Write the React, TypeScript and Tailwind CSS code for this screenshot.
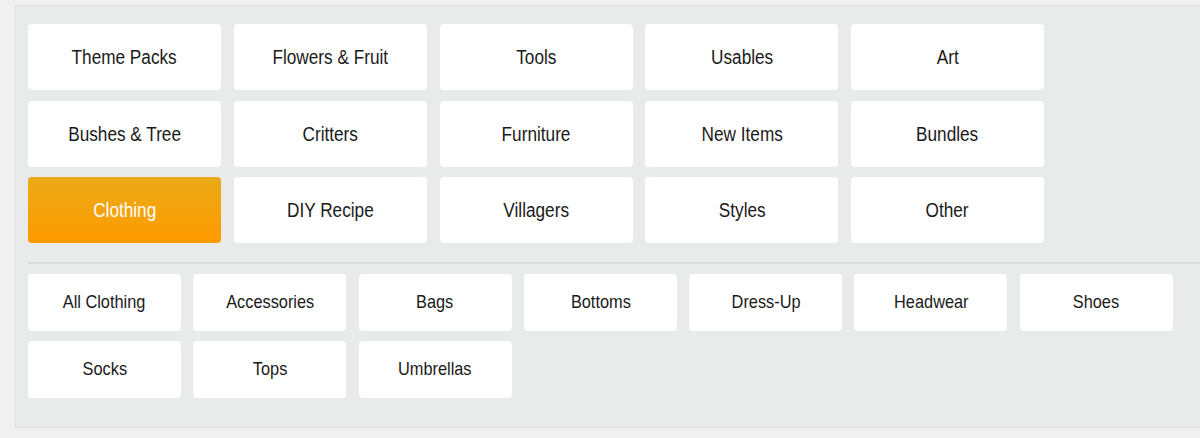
const MAIN_CATS = [
  'Theme Packs',
  'Flowers & Fruit',
  'Tools',
  'Usables',
  'Art',
  'Bushes & Tree',
  'Critters',
  'Furniture',
  'New Items',
  'Bundles',
  'Clothing',
  'DIY Recipe',
  'Villagers',
  'Styles',
  'Other',
] as const

const SUB_CATS = [
  'All Clothing',
  'Accessories',
  'Bags',
  'Bottoms',
  'Dress-Up',
  'Headwear',
  'Shoes',
  'Socks',
  'Tops',
  'Umbrellas',
] as const

const ACTIVE = 'Clothing'

function Label({ text }: { text: string }) {
  return <span className="inline-block origin-center scale-x-[0.86] whitespace-nowrap">{text}</span>
}

export default function App() {
  return (
    <div className="h-[438px] w-full overflow-hidden bg-[#f0f0f0] pt-[5px] pl-[15px] font-['Liberation_Sans',Arial,sans-serif]">
      <div className="w-[1220px] border border-[#e0e0e0] bg-[#e9eaea] pt-[18px] pb-[29px] pl-3">
        <div className="grid grid-cols-[repeat(5,193px)] gap-x-[12.75px] gap-y-[10.5px]">
          {MAIN_CATS.map((c) => (
            <button
              key={c}
              className={
                c === ACTIVE
                  ? 'flex h-[66px] items-center justify-center rounded-[4px] bg-gradient-to-b from-[#e9aa15] to-[#ff9b00] text-[20px] text-white'
                  : 'flex h-[66px] items-center justify-center rounded-[4px] bg-white text-[20px] text-[#1a1a1a]'
              }
            >
              <Label text={c} />
            </button>
          ))}
        </div>

        <div className="mt-[19px] mb-[10px] h-[2px] bg-[#dddddd]" />

        <div className="grid grid-cols-[repeat(7,153px)] gap-x-[12.3px] gap-y-[9.5px]">
          {SUB_CATS.map((c) => (
            <button
              key={c}
              className="flex h-[57px] items-center justify-center rounded-[4px] bg-white text-[19px] text-[#1a1a1a]"
            >
              <Label text={c} />
            </button>
          ))}
        </div>
      </div>
    </div>
  )
}
